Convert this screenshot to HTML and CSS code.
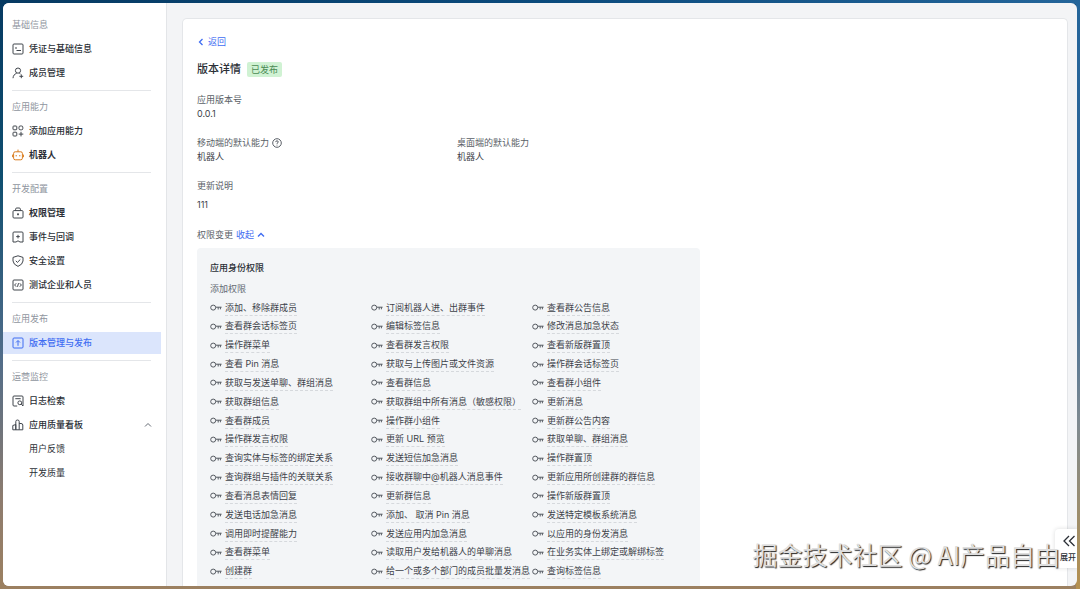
FILE: index.html
```html
<!DOCTYPE html>
<html lang="zh-CN">
<head>
<meta charset="utf-8">
<meta name="viewport" content="width=device-width, initial-scale=1">
<title>版本详情</title>
<link rel="stylesheet" href="styles.css">
</head>
<body>
<svg class="defs" aria-hidden="true">
  <symbol id="key" viewBox="0 0 12 8"><circle cx="3.2" cy="3.6" r="2.5"/><path d="M5.700 3.200H11.600M8.200 3.200V5.500M10.400 3.200V5.300"/></symbol>
</svg>
<div class="window">
  <nav class="sidebar" aria-label="应用导航">
    <section class="group">
      <h2 class="group-title">基础信息</h2>
      <a class="item" href="#"><svg class="icon" viewBox="0 0 12 12"><rect x="1" y="1" width="10" height="10" rx="1"/><path d="M3 5h2M4.500 7.500h4.500"/></svg>凭证与基础信息</a>
      <a class="item" href="#"><svg class="icon" viewBox="0 0 12 12"><circle cx="6" cy="3.6" r="2.6"/><path d="M1 11.2C1.2 8.6 2.5 7 4.6 6.4M7.4 6.4l1 .5M7.4 9.3h3.8M9.3 7.4v3.8"/></svg>成员管理</a>
    </section>
    <section class="group">
      <h2 class="group-title">应用能力</h2>
      <a class="item" href="#"><svg class="icon" viewBox="0 0 12 12"><rect x="1" y="1" width="3.8" height="3.8" rx=".8"/><rect x="1" y="7.2" width="3.8" height="3.8" rx=".8"/><rect x="7" y="1" width="3.8" height="3.8" rx="1.2"/><path d="M9 6.8v4.6M6.7 9.1h4.6"/></svg>添加应用能力</a>
      <a class="item strong" href="#"><svg class="icon orange" viewBox="0 0 12 12"><rect x="1.6" y="2.8" width="8.8" height="8" rx="1.6"/><path d="M6 .6v2.2M.4 5.6v2.6M11.6 5.6v2.6M4.2 6v1.4M7.8 6v1.4"/></svg>机器人</a>
    </section>
    <section class="group">
      <h2 class="group-title">开发配置</h2>
      <a class="item strong" href="#"><svg class="icon" viewBox="0 0 12 12"><rect x="1" y="3.6" width="10" height="7.4" rx="1"/><path d="M3.6 3.6V2.2Q3.6 1 4.8 1h2.4Q8.4 1 8.4 2.2v1.4M6 6.2v2.2M5 7.3h2"/></svg>权限管理</a>
      <a class="item" href="#"><svg class="icon" viewBox="0 0 12 12"><path d="M1 2Q1 1 2 1h8q1 0 1 1v9H8L6 9.8 4 11H1zM6 3.8v3.6M4.2 5.6h3.6"/></svg>事件与回调</a>
      <a class="item" href="#"><svg class="icon" viewBox="0 0 12 12"><path d="M6 .8 11 2.4V6Q10.600 9.600 6 11.400 1.400 9.600 1 6V2.400zM3.800 5.800 5.400 7.400 8.300 4.500"/></svg>安全设置</a>
      <a class="item" href="#"><svg class="icon" viewBox="0 0 12 12"><rect x="1" y="1" width="10" height="10" rx="1"/><path d="M4.2 4.300 2.600 6l1.600 1.700M7.800 4.300 9.400 6 7.800 7.700M6.500 4.200 5.500 7.800"/></svg>测试企业和人员</a>
    </section>
    <section class="group">
      <h2 class="group-title">应用发布</h2>
      <a class="item active" href="#" aria-current="page"><svg class="icon" viewBox="0 0 12 12"><rect x="1" y="1" width="10" height="10" rx="1"/><path d="M6 8.800V3.800M4 5.500 6 3.500 8 5.500"/></svg>版本管理与发布</a>
    </section>
    <section class="group">
      <h2 class="group-title">运营监控</h2>
      <a class="item" href="#"><svg class="icon" viewBox="0 0 12 12"><path d="M5.200 11H2Q1 11 1 10V2Q1 1 2 1h8q1 0 1 1v4M3.300 3.700h5.400"/><circle cx="7.800" cy="7.800" r="1.900"/><path d="M9.200 9.200 11 11M11 6v5"/></svg>日志检索</a>
      <button class="item toggle" type="button" aria-expanded="true"><svg class="icon" viewBox="0 0 12 12"><path d="M.8 10.800V6.500L3.800 5.500V10.800zM3.800 10.800V2.500Q3.800 1 5.500 1T7.200 2.500V10.800zM7.200 4.500H9Q10.800 4.500 10.800 6V10.800H7.200"/></svg>应用质量看板<svg class="caret" viewBox="0 0 8 6"><path d="M1 4.500 4 1.500 7 4.500"/></svg></button>
      <a class="item sub" href="#">用户反馈</a>
      <a class="item sub" href="#">开发质量</a>
    </section>
  </nav>
  <main class="main">
    <article class="card">
      <a class="back" href="#"><svg class="chevron" viewBox="0 0 8 8"><path d="M5.500 1 2.500 4l3 3"/></svg>返回</a>
      <header class="title-row"><h1 class="title">版本详情</h1><span class="tag">已发布</span></header>
      <dl class="fields">
        <div class="field wide"><dt>应用版本号</dt><dd>0.0.1</dd></div>
        <div class="field"><dt>移动端的默认能力<svg class="help" viewBox="0 0 10 10"><circle cx="5" cy="5" r="4.300"/><path d="M3.700 4.100Q3.800 2.800 5 2.800T6.300 4Q6.300 4.700 5 5.300V5.900M5 6.700v.8"/></svg></dt><dd>机器人</dd></div>
        <div class="field"><dt>桌面端的默认能力</dt><dd>机器人</dd></div>
        <div class="field wide spaced"><dt>更新说明</dt><dd>111</dd></div>
      </dl>
      <div class="change-row">权限变更<button class="collapse" type="button" aria-expanded="true">收起<svg class="caret" viewBox="0 0 8 6"><path d="M1 4.500 4 1.500 7 4.500"/></svg></button></div>
      <section class="panel">
        <h2 class="panel-title">应用身份权限</h2>
        <h3 class="panel-sub">添加权限</h3>
        <ul class="scopes">
          <li><svg class="key"><use href="#key"/></svg><span>添加、移除群成员</span></li>
          <li><svg class="key"><use href="#key"/></svg><span>订阅机器人进、出群事件</span></li>
          <li><svg class="key"><use href="#key"/></svg><span>查看群公告信息</span></li>
          <li><svg class="key"><use href="#key"/></svg><span>查看群会话标签页</span></li>
          <li><svg class="key"><use href="#key"/></svg><span>编辑标签信息</span></li>
          <li><svg class="key"><use href="#key"/></svg><span>修改消息加急状态</span></li>
          <li><svg class="key"><use href="#key"/></svg><span>操作群菜单</span></li>
          <li><svg class="key"><use href="#key"/></svg><span>查看群发言权限</span></li>
          <li><svg class="key"><use href="#key"/></svg><span>查看新版群置顶</span></li>
          <li><svg class="key"><use href="#key"/></svg><span>查看 Pin 消息</span></li>
          <li><svg class="key"><use href="#key"/></svg><span>获取与上传图片或文件资源</span></li>
          <li><svg class="key"><use href="#key"/></svg><span>操作群会话标签页</span></li>
          <li><svg class="key"><use href="#key"/></svg><span>获取与发送单聊、群组消息</span></li>
          <li><svg class="key"><use href="#key"/></svg><span>查看群信息</span></li>
          <li><svg class="key"><use href="#key"/></svg><span>查看群小组件</span></li>
          <li><svg class="key"><use href="#key"/></svg><span>获取群组信息</span></li>
          <li><svg class="key"><use href="#key"/></svg><span>获取群组中所有消息（敏感权限）</span></li>
          <li><svg class="key"><use href="#key"/></svg><span>更新消息</span></li>
          <li><svg class="key"><use href="#key"/></svg><span>查看群成员</span></li>
          <li><svg class="key"><use href="#key"/></svg><span>操作群小组件</span></li>
          <li><svg class="key"><use href="#key"/></svg><span>更新群公告内容</span></li>
          <li><svg class="key"><use href="#key"/></svg><span>操作群发言权限</span></li>
          <li><svg class="key"><use href="#key"/></svg><span>更新 URL 预览</span></li>
          <li><svg class="key"><use href="#key"/></svg><span>获取单聊、群组消息</span></li>
          <li><svg class="key"><use href="#key"/></svg><span>查询实体与标签的绑定关系</span></li>
          <li><svg class="key"><use href="#key"/></svg><span>发送短信加急消息</span></li>
          <li><svg class="key"><use href="#key"/></svg><span>操作群置顶</span></li>
          <li><svg class="key"><use href="#key"/></svg><span>查询群组与插件的关联关系</span></li>
          <li><svg class="key"><use href="#key"/></svg><span>接收群聊中@机器人消息事件</span></li>
          <li><svg class="key"><use href="#key"/></svg><span>更新应用所创建群的群信息</span></li>
          <li><svg class="key"><use href="#key"/></svg><span>查看消息表情回复</span></li>
          <li><svg class="key"><use href="#key"/></svg><span>更新群信息</span></li>
          <li><svg class="key"><use href="#key"/></svg><span>操作新版群置顶</span></li>
          <li><svg class="key"><use href="#key"/></svg><span>发送电话加急消息</span></li>
          <li><svg class="key"><use href="#key"/></svg><span>添加、 取消 Pin 消息</span></li>
          <li><svg class="key"><use href="#key"/></svg><span>发送特定模板系统消息</span></li>
          <li><svg class="key"><use href="#key"/></svg><span>调用即时提醒能力</span></li>
          <li><svg class="key"><use href="#key"/></svg><span>发送应用内加急消息</span></li>
          <li><svg class="key"><use href="#key"/></svg><span>以应用的身份发消息</span></li>
          <li><svg class="key"><use href="#key"/></svg><span>查看群菜单</span></li>
          <li><svg class="key"><use href="#key"/></svg><span>读取用户发给机器人的单聊消息</span></li>
          <li><svg class="key"><use href="#key"/></svg><span>在业务实体上绑定或解绑标签</span></li>
          <li><svg class="key"><use href="#key"/></svg><span>创建群</span></li>
          <li><svg class="key"><use href="#key"/></svg><span>给一个或多个部门的成员批量发消息</span></li>
          <li><svg class="key"><use href="#key"/></svg><span>查询标签信息</span></li>
        </ul>
      </section>
    </article>
  </main>
  <button class="expand" type="button"><svg class="double" viewBox="0 0 14 14"><path d="M7 2 2 7l5 5M12.500 2 7.500 7l5 5"/></svg>展开</button>
  <div class="watermark">掘金技术社区 @ AI产品自由</div>
</div>
</body>
</html>
```
FILE: styles.css
```css
* { box-sizing: border-box; }

body {
  margin: 0;
  height: 100vh;
  padding: 3px;
  overflow: hidden;
  background:
    linear-gradient(to bottom, #24659a 0%, #2f6699 45%, #7f8a90 72%, #b5904f 100%) right / 4px 100% no-repeat,
    linear-gradient(to right, #063a62, #0a4a7c 50%, #24659a) top / 100% 4px no-repeat,
    linear-gradient(to bottom, #063a62 0%, #0f4f70 30%, #4f6c8a 60%, #8e7c6e 85%, #9c8060 100%);
  color: #2b2f36;
  font: 9px/14px Inter, "Noto Sans CJK SC", sans-serif;
}

h1, h2, h3, dl, dd, ul { margin: 0; padding: 0; font-weight: 400; }
a { color: inherit; text-decoration: none; }
button { border: 0; padding: 0; background: none; color: inherit; font: inherit; cursor: pointer; }
svg { fill: none; stroke: currentColor; stroke-width: 1; flex: none; }
.defs { position: absolute; width: 0; height: 0; }

.window {
  position: relative;
  display: flex;
  height: 100%;
  overflow: hidden;
  border-radius: 6px;
  background: #f3f4f6;
}

/* Sidebar */
.sidebar {
  flex: none;
  width: 164px;
  padding: 10px 5px 0 0;
  border-right: 1px solid #e3e5e8;
  background: #fff;
}
.group + .group::before {
  content: "";
  display: block;
  height: 1px;
  margin: 6px 10px 4px 9px;
  background: #e4e6e9;
}
.group-title {
  padding-left: 9px;
  font-size: 9px;
  line-height: 24px;
  color: #8f959e;
}
.item {
  display: flex;
  align-items: center;
  gap: 5px;
  width: 100%;
  height: 22px;
  margin: 1px 0;
  padding: 0 9px;
  font-weight: 500;
}
.item.strong { font-weight: 700; }
.item.active { background: #dbe5fc; color: #3f6df2; }
.item.sub { padding-left: 26px; font-weight: 400; }
.group .item + .item { margin-top: 2px; }
.icon { width: 12px; height: 12px; color: #41464d; }
.active .icon { color: #3f6df2; }
.icon.orange { color: #d97b1c; }
.caret { width: 8px; height: 6px; }
.toggle .caret { margin-left: auto; color: #646a73; }

/* Version details */
.main {
  flex: 1;
  min-width: 0;
  padding: 15px 9px 0 15px;
}
.card {
  display: flex;
  flex-direction: column;
  height: 100%;
  padding: 15px 14px 0;
  border: 1px solid #e4e6e9;
  border-bottom: 0;
  border-radius: 5px 5px 0 0;
  background: #fff;
}
.back {
  display: flex;
  align-items: center;
  align-self: flex-start;
  gap: 3px;
  line-height: 16px;
  color: #3f6df2;
}
.chevron { width: 8px; height: 8px; stroke-width: 1.3; }
.title-row {
  display: flex;
  align-items: center;
  gap: 6px;
  margin: 11px 0 16px;
  line-height: 16px;
}
.title { font-size: 11px; font-weight: 500; }
.tag {
  padding: 0 4px;
  border-radius: 2px;
  background: #d0f2d3;
  color: #4a8a54;
  line-height: 15px;
}
.fields {
  display: grid;
  grid-template-columns: repeat(2, 260px);
  row-gap: 15px;
}
.field.wide { grid-column: 1 / -1; }
.field dt { display: flex; align-items: center; gap: 3px; color: #5a5f67; }
.field dd { color: #3d4249; }
.field.spaced dd { margin-top: 5px; }
.help { width: 10px; height: 10px; }
.change-row {
  display: flex;
  gap: 3px;
  margin: 16px 0 6px;
  color: #5a5f67;
}
.collapse { display: flex; align-items: center; gap: 3px; color: #3f6df2; }
.collapse .caret { stroke-width: 1.4; }

.panel {
  display: flex;
  flex: 1;
  flex-direction: column;
  max-width: 503px;
  padding: 13px 7px 7px 13px;
  border-radius: 4px 4px 0 0;
  background: #f3f5f7;
}
.panel-title { font-size: 9px; font-weight: 500; }
.panel-sub { margin: 7px 0 5px; font-size: 9px; color: #646a73; }
.scopes {
  display: grid;
  flex: 1;
  grid-template-columns: repeat(3, 1fr);
  grid-auto-rows: 14px;
  align-content: space-between;
  list-style: none;
  color: #3d4249;
}
.scopes li { display: flex; align-items: center; gap: 3px; white-space: nowrap; }
.scopes span { border-bottom: 1px dashed #d6d9dd; }
.key { width: 12px; height: 8px; color: #555a61; }

/* Floating layer */
.expand {
  position: absolute;
  right: 0;
  bottom: 18px;
  display: flex;
  flex-direction: column;
  align-items: flex-end;
  gap: 2px;
  width: 22px;
  padding: 5px 1px 4px 0;
  border-radius: 4px 0 0 4px;
  background: #fff;
  box-shadow: 0 0 4px rgba(31, 35, 41, .16);
  font-size: 8px;
  font-weight: 500;
}
.double { width: 14px; height: 14px; stroke-width: 1.3; }
.watermark {
  position: absolute;
  right: 17px;
  bottom: 17px;
  font-family: "Noto Sans CJK SC", sans-serif;
  font-size: 25px;
  line-height: 30px;
  white-space: nowrap;
  color: #dedede;
  text-shadow: 1px 1px 1px #222;
  pointer-events: none;
}
```
